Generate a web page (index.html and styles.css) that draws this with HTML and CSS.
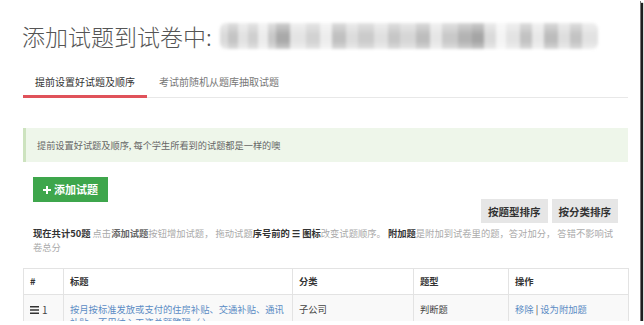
FILE: index.html
```html
<!DOCTYPE html>
<html lang="zh-CN">
<head>
    <meta charset="UTF-8">
    <title>添加试题到试卷中</title>
    <link rel="stylesheet" href="styles.css">
</head>
<body>
<div class="shot">
    <div class="page">
        <!-- title, paper name is blurred -->
        <h1 class="page-title">添加试题到试卷中:<span class="blur"></span></h1>

        <ul class="tabs">
            <li class="active">提前设置好试题及顺序</li>
            <li>考试前随机从题库抽取试题</li>
        </ul>

        <div class="alert">提前设置好试题及顺序, 每个学生所看到的试题都是一样的噢</div>

        <div class="toolbar">
            <button type="button" class="btn-add">
                <svg width="8" height="8" viewBox="0 0 8 8"><path d="M3 0h2v3h3v2H5v3H3V5H0V3h3z" fill="#fff"/></svg>
                <span>添加试题</span>
            </button>
            <div class="sort">
                <button type="button">按题型排序</button>
                <button type="button">按分类排序</button>
            </div>
        </div>

        <p class="tips"><b class="dark">现在共计50题</b> 点击<b>添加试题</b>按钮增加试题， 拖动试题<b class="dark">序号前的 ☰ 图标</b>改变试题顺序。 <b class="dark">附加题</b>是附加到试卷里的题，答对加分， 答错不影响试卷总分</p>

        <table class="questions">
            <thead>
                <tr>
                    <th class="c-no">#</th>
                    <th class="c-title">标题</th>
                    <th class="c-cat">分类</th>
                    <th class="c-type">题型</th>
                    <th class="c-op">操作</th>
                </tr>
            </thead>
            <tbody>
                <tr>
                    <td><span class="drag"><svg width="9" height="8" viewBox="0 0 9 8"><path d="M0 0h9v1.6H0zM0 3.2h9v1.6H0zM0 6.4h9V8H0z" fill="#333"/></svg>1</span></td>
                    <td><a href="#">按月按标准发放或支付的住房补贴、交通补贴、通讯补贴，不用纳入工资总额管理（ ）。</a></td>
                    <td>子公司</td>
                    <td>判断题</td>
                    <td><a href="#">移除</a> | <a href="#">设为附加题</a></td>
                </tr>
            </tbody>
        </table>
    </div>
</div>
</body>
</html>
```

FILE: styles.css
```css
*{
    margin: 0;
    padding: 0;
    box-sizing: border-box;
}
body{
    font-family: "Noto Sans CJK SC", sans-serif;
    background: #fff;
    color: #333;
}
.shot{
    width: 640px;
    height: 321px;
    overflow: hidden;
    background: #fff;
    box-shadow: 1px 1px 0 #777, 3px 3px 1px #1e1e1e;
}
.page{
    padding: 21px 12px 0 23px;
}
.page-title{
    display: flex;
    align-items: center;
    margin-left: -1px;
    font-size: 23px;
    font-weight: 300;
    line-height: 30px;
    color: #555;
}
.blur{
    width: 378px;
    height: 26px;
    margin-left: 8px;
    border-radius: 6px;
    filter: blur(1.6px);
    background:
        linear-gradient(180deg, rgba(255,255,255,.45), rgba(255,255,255,0) 45%, rgba(255,255,255,0) 70%, rgba(255,255,255,.4)),
        linear-gradient(90deg,
            #dadada 0 8px, #c4c4c4 8px 18px, #e2e2e2 18px 28px, #cfcfcf 28px 38px,
            #ececec 38px 48px, #c8c8c8 48px 56px, #a9a9a9 56px 70px, #e4e4e4 70px 86px,
            #d2d2d2 86px 100px, #ededed 100px 112px, #c0c0c0 112px 126px, #dcdcdc 126px 138px,
            #cbcbcb 138px 154px, #e0e0e0 154px 168px, #c6c6c6 168px 180px, #d6d6d6 180px 196px,
            #bdbdbd 196px 210px, #e6e6e6 210px 222px, #c9c9c9 222px 238px, #b3b3b3 238px 252px,
            #a5a5a5 252px 264px, #dadada 264px 276px, #f4f4f4 276px 286px, #e3e3e3 286px 300px,
            #c2c2c2 300px 312px, #e8e8e8 312px 324px, #bcbcbc 324px 338px, #dedede 338px 350px,
            #c3c3c3 350px 362px, #e2e2e2 362px 378px);
}
.tabs{
    display: flex;
    margin-top: 23px;
    list-style: none;
    border-bottom: 1px solid #e8e8e8;
}
.tabs li{
    padding: 0 12px 5px;
    margin-bottom: -1px;
    font-size: 10px;
    line-height: 16px;
    color: #777;
    border-bottom: 3px solid transparent;
}
.tabs .active{
    color: #333;
    border-bottom-color: #e0525a;
}
.alert{
    margin-top: 30px;
    padding: 0 11px;
    height: 34px;
    line-height: 34px;
    font-size: 9.2px;
    color: #666;
    background: #eef6ea;
    border-left: 3px solid #cde3bf;
}
.toolbar{
    display: flex;
    justify-content: space-between;
    align-items: flex-start;
    margin-top: 15px;
    padding: 0 10px;
}
button{
    border: none;
    outline: none;
    font-family: inherit;
}
.btn-add{
    display: flex;
    align-items: center;
    gap: 3px;
    height: 25px;
    padding: 0 10px;
    white-space: nowrap;
    font-size: 11px;
    font-weight: 700;
    line-height: 25px;
    color: #fff;
    background: #3ea64c;
}
.sort{
    display: flex;
    gap: 4px;
    margin-top: 22px;
}
.sort button{
    height: 24px;
    padding: 0 7px;
    white-space: nowrap;
    font-size: 10.5px;
    font-weight: 700;
    color: #333;
    background: #e6e6e6;
}
.tips{
    margin-top: 3px;
    padding: 0 10px;
    font-size: 9.3px;
    line-height: 14px;
    color: #aaa;
}
.tips b{
    color: #666;
}
.tips .dark{
    color: #333;
}
.questions{
    width: 605px;
    margin-top: 14px;
    border-collapse: collapse;
    table-layout: fixed;
    font-size: 9.3px;
    line-height: 13px;
}
.questions th,
.questions td{
    border: 1px solid #e3e3e3;
    text-align: left;
    vertical-align: top;
}
.questions th{
    padding: 6px 6px;
    font-weight: 700;
    color: #333;
}
.questions td{
    padding: 8px 6px;
    color: #444;
}
.questions tbody tr{
    background: #f9f9f9;
}
.c-no{ width: 40px; }
.c-title{ width: 229px; }
.c-cat{ width: 121px; }
.c-type{ width: 95px; }
.c-op{ width: 120px; }
.drag{
    display: inline-flex;
    align-items: center;
    gap: 3px;
    font-size: 10px;
}
.questions a{
    color: #5a8bc4;
    text-decoration: none;
}
```
